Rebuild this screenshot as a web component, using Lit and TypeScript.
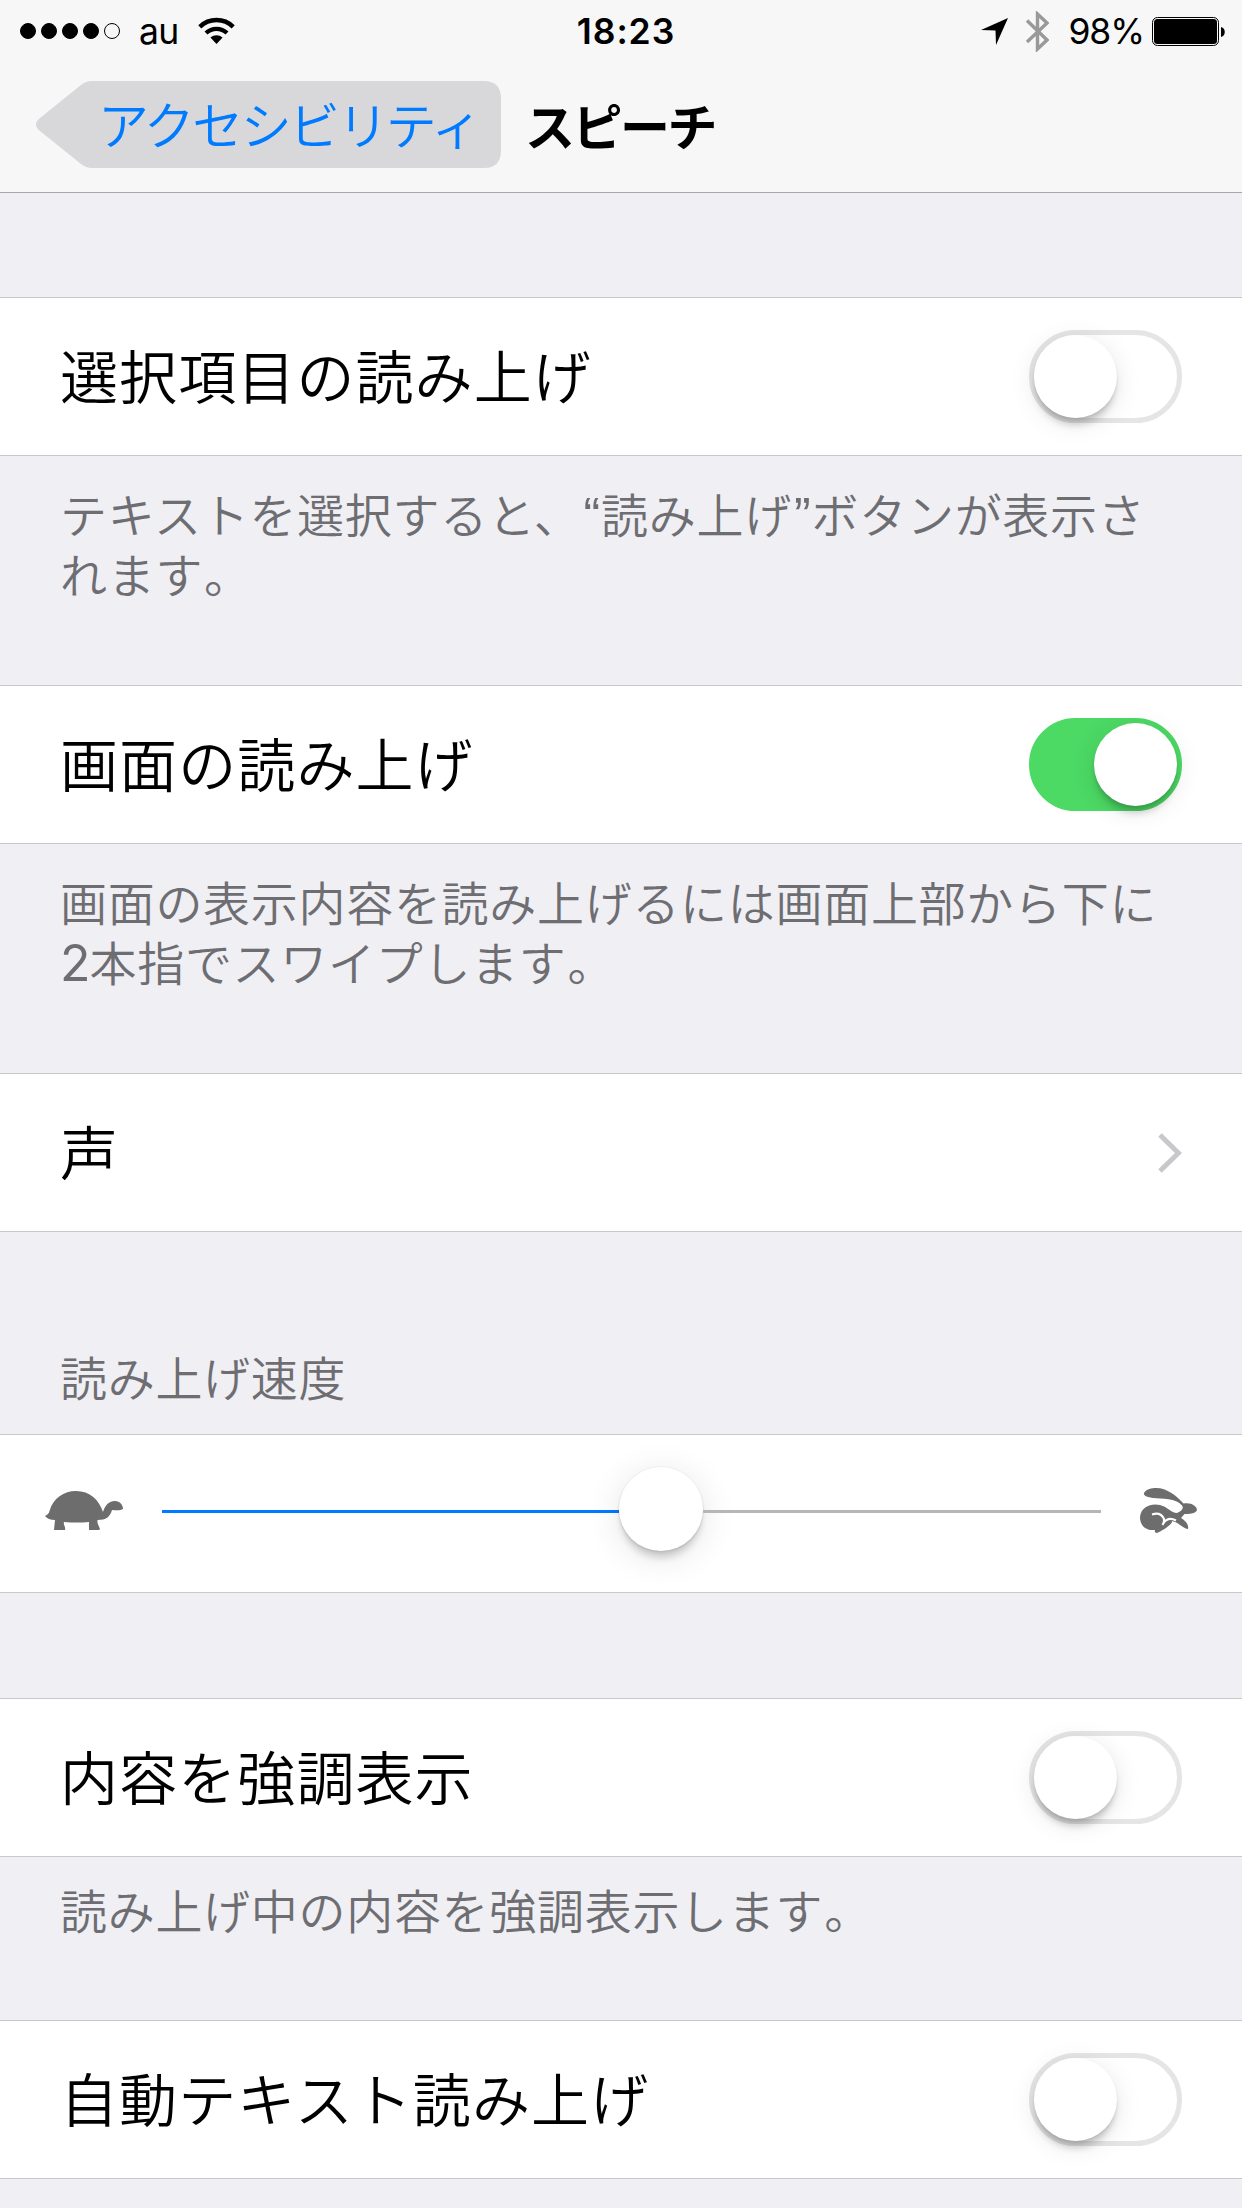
import { LitElement, html, css, svg } from "lit";
import { customElement, property } from "lit/decorators.js";

@customElement("ios-switch")
class IosSwitch extends LitElement {
  @property({ type: Boolean, reflect: true }) on = false;
  static styles = css`
    :host { display: block; flex: none; }
    .track { box-sizing: border-box; width: 153px; height: 93px; border-radius: 47px; border: 5px solid #e5e5e5; background: #fff; display: flex; justify-content: flex-start; }
    .knob { width: 83px; height: 83px; border-radius: 50%; background: #fff; box-shadow: 0 9px 7px -2px rgba(0,0,0,.17), 0 5px 26px rgba(0,0,0,.1), 0 2px 3px rgba(0,0,0,.08); }
    :host([on]) .track { background: #4cd964; border-color: #4cd964; justify-content: flex-end; }
  `;
  render() {
    return html`<div class="track"><div class="knob"></div></div>`;
  }
}

const wifi = svg`<path d="M1.800 9.800 A24 24 0 0 1 35.200 9.800" fill="none" stroke="#000" stroke-width="4.4"/><path d="M8 16 A15.500 15.500 0 0 1 29 16" fill="none" stroke="#000" stroke-width="4.400"/><path d="M12.400 20.500 A9.500 9.500 0 0 1 24.600 20.500 L18.500 27 Z"/>`;

@customElement("app-root")
class AppRoot extends LitElement {
  static styles = css`
    :host { display: block; width: 1242px; height: 2208px; overflow: hidden; background: #efeff4; color: #000; font-family: Inter, "Noto Sans CJK JP", sans-serif; }
    svg { display: block; flex: none; }
    .head { box-sizing: border-box; height: 193px; background: #f7f7f7; border-bottom: 1px solid #a7a7aa; }
    .status { display: grid; grid-template-columns: 1fr auto 1fr; height: 60px; padding: 0 17px 0 20px; align-items: center; font-size: 35.5px; line-height: 60px; }
    .left, .right { display: flex; align-items: center; height: 60px; }
    .right { justify-content: flex-end; }
    .dots { display: flex; gap: 5px; margin-right: 19px; }
    .dot { box-sizing: border-box; width: 16px; height: 16px; border-radius: 50%; border: 1px solid #000; background: #000; }
    .dot.off { background: none; }
    .au { width: 59px; letter-spacing: -.8px; }
    .time { font-weight: 600; letter-spacing: .9px; padding: 2px 0 0 7px; }
    .txt { padding-top: 2px; }
    .pct { margin: 0 8px 0 19px; letter-spacing: -1.1px; }
    .nav { display: flex; align-items: center; padding: 21px 36px 0; font-family: "Noto Sans CJK JP", sans-serif; font-size: 50px; line-height: 87px; white-space: nowrap; }
    .back { display: grid; width: 465px; height: 87px; color: #007aff; }
    .back > * { grid-area: 1 / 1; }
    .backtext { padding-left: 62px; font-size: 51px; line-height: 85px; letter-spacing: -2.600px; font-weight: 350; }
    .title { margin-left: 24px; font-weight: 700; letter-spacing: -2.500px; line-height: 84px; margin-bottom: 2px; }
    .row { box-sizing: border-box; height: 159px; border-top: 1px solid #c8c7cc; border-bottom: 1px solid #c8c7cc; background: #fff; display: flex; align-items: center; justify-content: space-between; padding: 0 60px; font-family: "Noto Sans CJK JP", sans-serif; font-size: 58px; font-weight: 350; letter-spacing: 1.1px; white-space: nowrap; }
    .label { line-height: 86px; margin-bottom: 6px; }
    .note { box-sizing: border-box; padding: 27px 60px 0; font-family: "Noto Sans CJK JP", sans-serif; font-size: 47px; line-height: 60px; font-weight: 350; color: #6d6d72; white-space: nowrap; letter-spacing: .7px; }
    .q { font-family: "Liberation Sans", sans-serif; font-size: 50px; line-height: 0; letter-spacing: 1px; margin-left: 2px; }
    .d { font-family: Inter, sans-serif; font-size: 50px; font-weight: 400; line-height: 0; letter-spacing: -1px; }
    .stop { margin-left: 1px; }
    .gap1 { height: 104px; }
    .n1 { height: 229px; }
    .caption { height: 202px; padding-top: 114px; }
    .gap2 { height: 105px; }
    .n3 { height: 163px; padding-top: 22px; }
    .slider { padding: 0 45px; }
    .animal { margin-bottom: 6px; }
    .bar { display: flex; align-items: center; width: 939px; margin: 0 39px; height: 84px; }
    .fill { height: 3px; width: 457px; background: #007aff; margin-bottom: 4px; }
    .rest { height: 3px; flex: 1; background: #b6b6b6; margin-bottom: 4px; }
    .thumb { width: 84px; height: 84px; border-radius: 50%; background: #fff; flex: none; box-shadow: 0 0 0 1px rgba(0,0,0,.03), 0 9px 7px -2px rgba(0,0,0,.15), 0 6px 36px rgba(0,0,0,.11), 0 2px 3px rgba(0,0,0,.07); margin-top: -9px; }
  `;
  render() {
    return html`
      <header class="head">
        <div class="status">
          <div class="left">
            <div class="dots">${[1, 1, 1, 1, 0].map((d) => html`<div class="dot ${d ? "" : "off"}"></div>`)}</div>
            <span class="au txt">au</span>
            <svg width="37" height="28" viewBox="0 0 37 28">${wifi}</svg>
          </div>
          <div class="time">18:23</div>
          <div class="right">
            <svg width="27" height="27" viewBox="0 0 27 27"><path d="M27 0 L15 27 L14.500 12.500 L0 12 Z"/></svg>
            <svg class="bt" width="41" height="41" viewBox="-18 0 41 41"><path d="M1 9.500 L21 29 L11.500 38 V3 L21 12 L1 31" fill="none" stroke="#999" stroke-width="3.400"/></svg>
            <span class="pct txt">98%</span>
            <svg width="73" height="29" viewBox="0 0 73 29"><rect x=".5" y=".5" width="66" height="28" rx="5" fill="none" stroke="#000"/><rect x="2" y="2" width="63" height="25" rx="3.500"/><path d="M69 10 C74 11 74 19 69 20 Z"/></svg>
          </div>
        </div>
        <div class="nav">
          <div class="back">
            <svg width="465" height="87" viewBox="0 0 465 87"><path d="M56 0 H448 Q465 0 465 18 V69 Q465 87 448 87 H56 Q50 87 45 83 L4 50 Q-4 43.500 4 37 L45 4 Q50 0 56 0Z" fill="#d8d8da"/></svg>
            <span class="backtext">アクセシビリティ</span>
          </div>
          <span class="title">スピーチ</span>
        </div>
      </header>
      <div class="gap1"></div>
      <div class="row"><span class="label">選択項目の読み上げ</span><ios-switch></ios-switch></div>
      <div class="note n1">テキストを選択すると、<span class="q">“</span>読み上げ<span class="q">”</span>ボタンが表示さ<br>れます<span class="stop">。</span></div>
      <div class="row"><span class="label">画面の読み上げ</span><ios-switch on></ios-switch></div>
      <div class="note n1">画面の表示内容を読み上げるには画面上部から下に<br><span class="d">2</span>本指でスワイプします<span class="stop">。</span></div>
      <div class="row"><span class="label">声</span>
        <svg width="24" height="40" viewBox="0 0 24 40"><path d="M2 2 L20.500 20 L2 38" fill="none" stroke="#c7c7cc" stroke-width="5"/></svg>
      </div>
      <div class="note caption">読み上げ速度</div>
      <div class="row slider">
        <svg class="animal" width="78" height="39" viewBox="0 0 78 39" fill="#6d6d6d"><path d="M4.500 20 C8 7 19 0 31 0 C45 0 54 9 58 21 C60 15 63 10 70 10 C75 10 78 14 78 18 C75 20 70 19 67 19 C65 26 61 29 52.500 29 C52 33 54 35 55 38 L54 39 H44 L44 31 Q32 32 19 31 C18 34 21 36 20 39 H9 L10 29 Q3 29 0 25 Q4 23 4.500 20Z"/></svg>
        <div class="bar"><div class="fill"></div><div class="thumb"></div><div class="rest"></div></div>
        <svg class="animal" width="57" height="46" viewBox="0 0 57 46" fill="#6d6d6d"><path d="M4 5 C6 1 12 0 16 0 C27 0 37 8 43.500 15.500 C51 14 57 18 57 22 C56 26 48 26 44.500 26 L41 30 C46 33 49 37 48 41 C44 41 40 36 35 34 L32 33 C33 36 22 43 17 45 Q14 45 15 42 C4 43 0 36 0 29 C1 18 12 15 20 17 C28 19 31 25 37 25 C42 23 44 20 42 17.500 C36 10 22 11 13 10 C8 9 3 8 4 5Z"/><path d="M12 26.500 Q20 23.500 23.500 30 Q25 33 22.500 37 M23.500 35 Q28 28.500 36 32.500" fill="none" stroke="#fff" stroke-width="2.200"/></svg>
      </div>
      <div class="gap2"></div>
      <div class="row"><span class="label">内容を強調表示</span><ios-switch></ios-switch></div>
      <div class="note n3">読み上げ中の内容を強調表示します<span class="stop">。</span></div>
      <div class="row"><span class="label">自動テキスト読み上げ</span><ios-switch></ios-switch></div>
    `;
  }
}
